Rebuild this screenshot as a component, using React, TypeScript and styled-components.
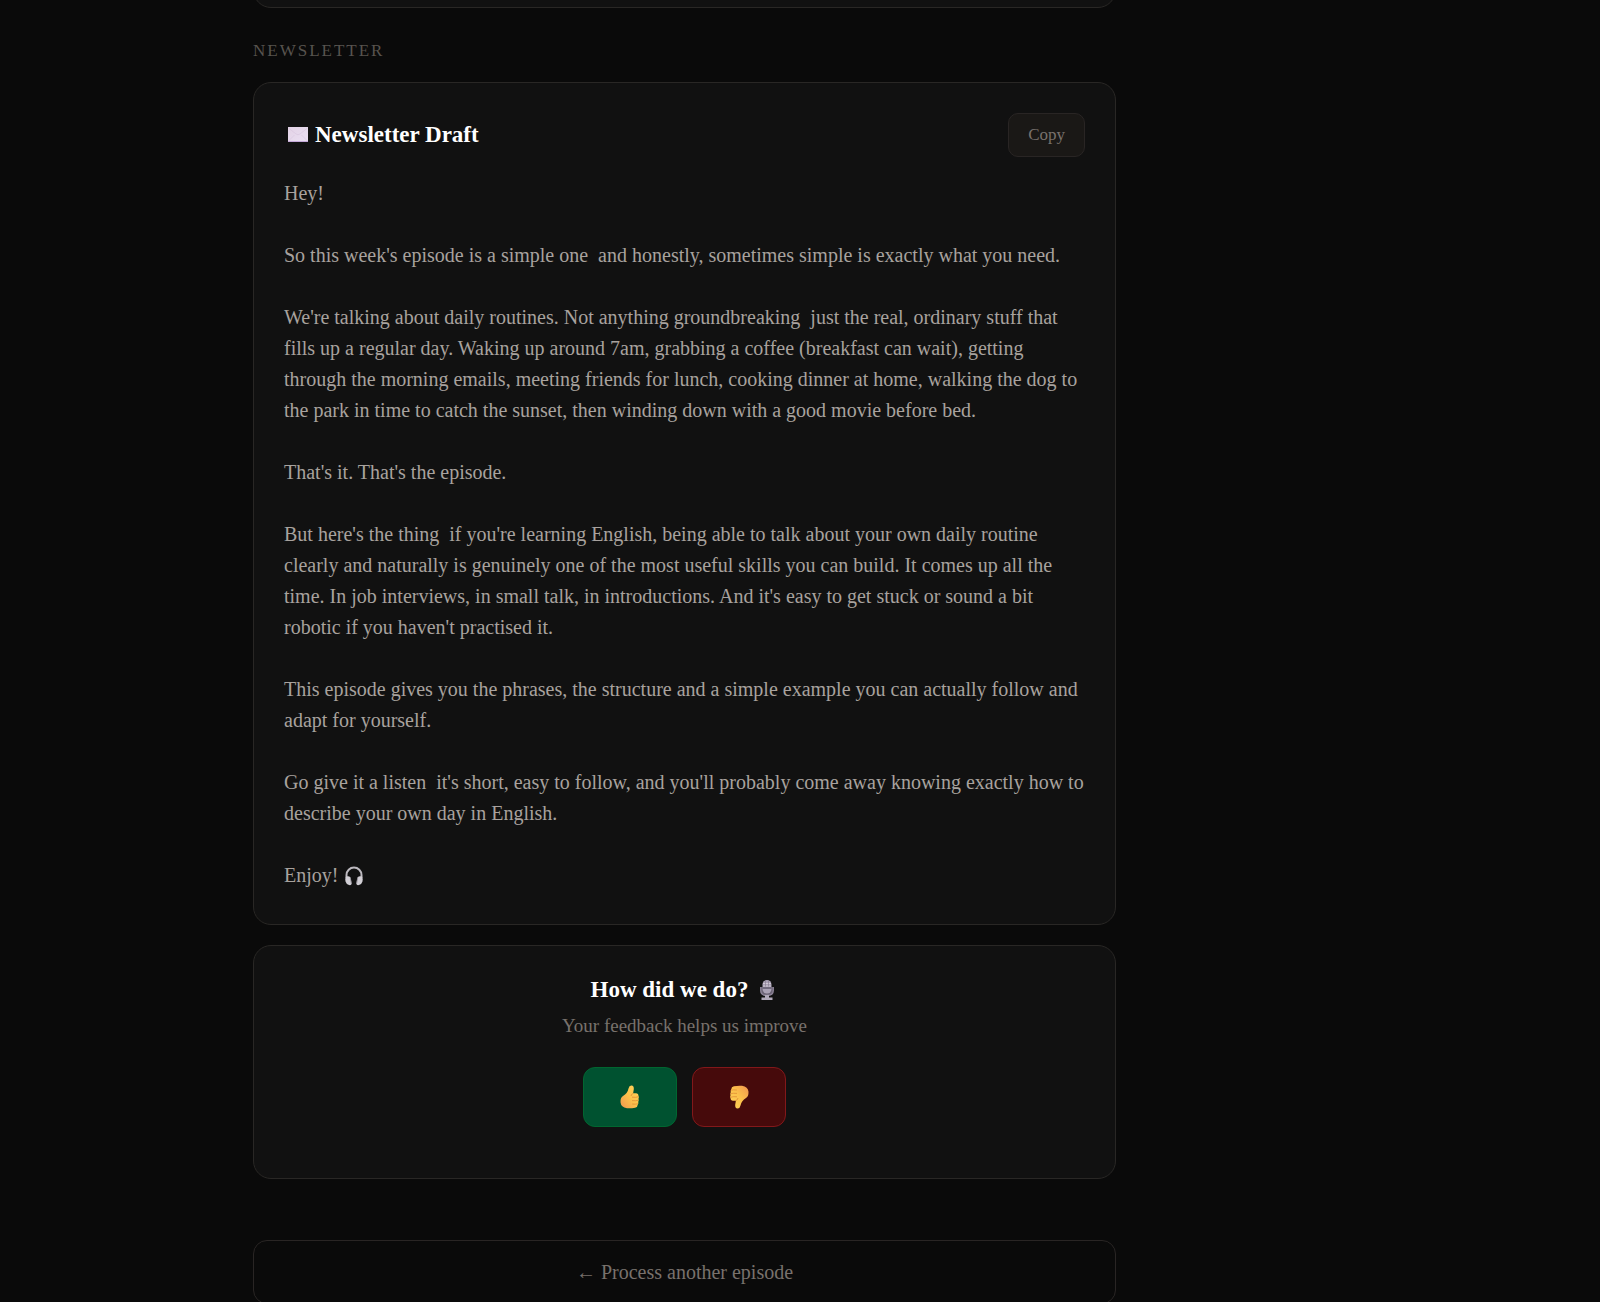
import React from 'react';
import styled, { createGlobalStyle } from 'styled-components';

const serif = '"Liberation Serif", "DejaVu Serif", serif';

const GlobalStyle = createGlobalStyle`
  *, *::before, *::after { box-sizing: border-box; }
  body { margin: 0; background: #0a0a0a; color: #a8a29e; font-family: ${serif}; }
  h2, h3, p { margin: 0; }
  button { font-family: inherit; cursor: pointer; }
`;

const Page = styled.main`
  display: flex;
  flex-direction: column;
  height: 100vh;
  overflow: hidden;
  padding-left: 253px;
`;

const Column = styled.div`
  display: flex;
  flex-direction: column;
  width: 100%;
  max-width: 863px;
`;

const Card = styled.section`
  padding: 30px 30px 33px;
  background: #111111;
  border: 1px solid #292725;
  border-radius: 18px;
`;

const PreviousCard = styled(Card)`
  margin-top: -57px;
`;

const SectionLabel = styled.h2`
  margin: 31px 0 20px;
  font-size: 17px;
  line-height: 23px;
  font-weight: 400;
  letter-spacing: 2px;
  text-transform: uppercase;
  color: #57534e;
`;

const CardHeader = styled.header`
  display: flex;
  align-items: center;
  justify-content: space-between;
  margin-bottom: 21px;
`;

const Title = styled.h3<{ $gap: number }>`
  display: flex;
  align-items: center;
  gap: ${(p) => p.$gap}px;
  font-size: 23px;
  line-height: 26px;
  font-weight: 700;
  color: #ffffff;
`;

const CopyButton = styled.button`
  height: 44px;
  padding: 0 19px;
  background: #1a1816;
  border: 1px solid #292524;
  border-radius: 10px;
  font-size: 17px;
  color: #78716c;
`;

const Letter = styled.div`
  display: flex;
  flex-direction: column;
  gap: 31px;
  font-size: 20px;
  line-height: 31px;
  color: #a8a29e;
  white-space: pre-wrap;
`;

const Feedback = styled(Card)`
  display: flex;
  flex-direction: column;
  align-items: center;
  margin-top: 20px;
  padding-top: 31px;
  padding-bottom: 51px;
`;

const Subtitle = styled.p`
  margin-top: 10px;
  font-size: 19px;
  line-height: 26px;
  color: #78716c;
`;

const Votes = styled.div`
  display: flex;
  gap: 15px;
  margin-top: 28px;
`;

const VoteButton = styled.button<{ $tone: 'up' | 'down' }>`
  display: flex;
  align-items: center;
  justify-content: center;
  width: 94px;
  height: 60px;
  padding: 0;
  background: ${(p) => (p.$tone === 'up' ? '#005230' : '#460a0b')};
  border: 1px solid ${(p) => (p.$tone === 'up' ? '#016630' : '#82181a')};
  border-radius: 12px;
`;

const RestartButton = styled.button`
  width: 100%;
  height: 64px;
  margin-top: 61px;
  background: transparent;
  border: 1px solid #292524;
  border-radius: 14px;
  font-size: 20px;
  line-height: 26px;
  color: #78716c;
`;

const Glyph = styled.svg`
  display: inline-block;
  flex: none;
  vertical-align: -5px;
`;

const Envelope = () => (
  <Glyph width="26" height="24" viewBox="0 0 26 24" aria-hidden="true">
    <defs>
      <linearGradient id="paper" x1="0" y1="0" x2="1" y2="1">
        <stop offset="0" stopColor="#e3d3e6" />
        <stop offset="1" stopColor="#eadff2" />
      </linearGradient>
    </defs>
    <rect x="4" y="4" width="20" height="15" fill="url(#paper)" />
    <path d="M4 18.5h20" stroke="#c4a8d8" />
    <path d="M4.500 5l7.500 6q2 1.500 4 0l7.500-6M4.500 18l6-6M23.500 18l-6-6" fill="none" stroke="#d6c4de" strokeWidth=".6" />
  </Glyph>
);

const Headphones = () => (
  <Glyph width="22" height="22" viewBox="0 0 22 22" aria-hidden="true">
    <path d="M3.500 13V10a7.500 7.500 0 0 1 15 0v3" fill="none" stroke="#bcb9bf" strokeWidth="2" />
    <path d="M3 11.500q3-1 4.500 1l1.200 6.300q-.5 1.800-2.700 1.200-2.800-.8-3.500-3.500-.6-3 .5-5zM19 11.500q-3-1-4.500 1l-1.200 6.300q.5 1.800 2.700 1.200 2.800-.8 3.500-3.500.6-3-.5-5z" fill="#d2cfd5" />
    <path d="M7.200 12.500l1.300 6.500M14.800 12.500l-1.300 6.500" stroke="#8d8991" strokeWidth=".8" />
  </Glyph>
);

const Microphone = () => (
  <Glyph width="22" height="24" viewBox="0 0 22 24" aria-hidden="true">
    <path d="M4.700 9v3.500q0 5 6.300 5t6.300-5V9" fill="#6b6375" stroke="#8c8397" strokeWidth="1.300" />
    <path d="M9 17h4v2.500h3.500V22h-11v-2.500H9z" fill="#b1a9ba" />
    <rect x="6.500" y="2" width="9" height="13.500" rx="4.500" fill="#aaa1b5" />
    <path d="M7 5.500h8M7 8h8" stroke="#d7d1dc" strokeWidth=".8" />
    <path d="M6.500 10h9" stroke="#5b5366" strokeWidth="1.400" />
    <path d="M9.500 2.500v6M12.500 2.500v6" stroke="#817789" strokeWidth=".6" />
  </Glyph>
);

const Thumb = ({ id }: { id: string }) => (
  <>
    <defs>
      <linearGradient id={id} x1="0" y1="1" x2="1" y2="0">
        <stop offset="0" stopColor="#f0964f" />
        <stop offset=".5" stopColor="#fcc24b" />
        <stop offset="1" stopColor="#ffd25a" />
      </linearGradient>
    </defs>
    <path
      d="M13.500.5q2.600.2 2.300 3.800l-.7 4h3.200q2.300.2 2.200 2.500.7 1.400 0 2.900.5 1.600-.2 3 .4 1.900-.6 3 0 2.500-2.600 3-4.500.9-8.100.5-6-.8-6.500-6-.2-4.700 2.500-6.200Q9.500 8.500 10.500 3.500q.7-3.200 3-3z"
      fill={`url(#${id})`}
    />
    <path d="M13 11q.4-2.300 2.300-2.600M20.300 11.700q-1.800 1-6.300.5M20.300 15.200q-1.800.9-6.300.4M19.700 18.700q-1.800.8-5.500.3" fill="none" stroke="#e39338" strokeWidth=".9" />
  </>
);

const ThumbUp = () => (
  <Glyph width="24" height="24" viewBox="0 0 24 24" aria-hidden="true">
    <Thumb id="skinUp" />
  </Glyph>
);

const ThumbDown = () => (
  <Glyph width="24" height="24" viewBox="0 0 24 24" aria-hidden="true">
    <g transform="rotate(180 12 12)">
      <Thumb id="skinDown" />
    </g>
  </Glyph>
);

const paragraphs = [
  'Hey!',
  "So this week's episode is a simple one  and honestly, sometimes simple is exactly what you need.",
  "We're talking about daily routines. Not anything groundbreaking  just the real, ordinary stuff that\nfills up a regular day. Waking up around 7am, grabbing a coffee (breakfast can wait), getting\nthrough the morning emails, meeting friends for lunch, cooking dinner at home, walking the dog to\nthe park in time to catch the sunset, then winding down with a good movie before bed.",
  "That's it. That's the episode.",
  "But here's the thing  if you're learning English, being able to talk about your own daily routine\nclearly and naturally is genuinely one of the most useful skills you can build. It comes up all the\ntime. In job interviews, in small talk, in introductions. And it's easy to get stuck or sound a bit\nrobotic if you haven't practised it.",
  'This episode gives you the phrases, the structure and a simple example you can actually follow and\nadapt for yourself.',
  "Go give it a listen  it's short, easy to follow, and you'll probably come away knowing exactly how to\ndescribe your own day in English.",
];

export default function App() {
  return (
    <>
      <GlobalStyle />
      <Page>
        <Column>
          <PreviousCard />
          <SectionLabel>Newsletter</SectionLabel>
          <Card>
            <CardHeader>
              <Title $gap={5}>
                <Envelope />
                Newsletter Draft
              </Title>
              <CopyButton type="button">Copy</CopyButton>
            </CardHeader>
            <Letter>
              {paragraphs.map((text) => (
                <p key={text}>{text}</p>
              ))}
              <p>Enjoy! <Headphones /></p>
            </Letter>
          </Card>
          <Feedback>
            <Title $gap={8}>
              How did we do?
              <Microphone />
            </Title>
            <Subtitle>Your feedback helps us improve</Subtitle>
            <Votes>
              <VoteButton type="button" $tone="up" aria-label="Good">
                <ThumbUp />
              </VoteButton>
              <VoteButton type="button" $tone="down" aria-label="Bad">
                <ThumbDown />
              </VoteButton>
            </Votes>
          </Feedback>
          <RestartButton type="button">← Process another episode</RestartButton>
        </Column>
      </Page>
    </>
  );
}
